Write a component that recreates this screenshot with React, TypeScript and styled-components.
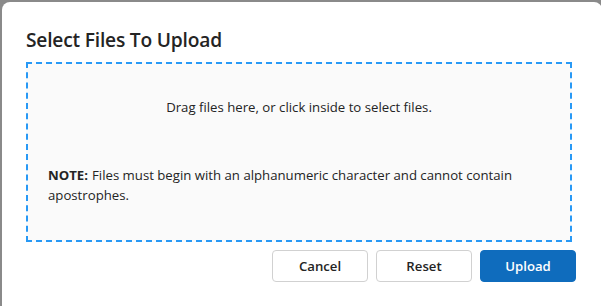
import React from "react";
import styled, { createGlobalStyle } from "styled-components";

const Global = createGlobalStyle`
  html, body {
    margin: 0;
    padding: 0;
    background: #8a8a8a;
    width: 601px;
    height: 306px;
    overflow: hidden;
  }
  * { box-sizing: border-box; }
`;

const Dialog = styled.div`
  margin: 2px 0 0 2px;
  width: 600px;
  height: 304px;
  background: #ffffff;
  border-radius: 8px 8px 0 0;
  padding: 24px 26px 0 24px;
  display: flex;
  flex-direction: column;
  font-family: "Open Sans", "Noto Sans", sans-serif;
  color: #242424;
`;

const Title = styled.h2`
  margin: 0;
  font-size: 19.2px;
  line-height: 28px;
  font-weight: 600;
  letter-spacing: -0.2px;
`;

const DropZone = styled.div`
  margin: 8px 4px 0 0;
  height: 180px;
  border: 2px dashed #2899f5;
  background: #fafafa;
  padding: 33px 20px 0 20px;
  display: flex;
  flex-direction: column;
  gap: 48px;
  font-size: 13.2px;
  line-height: 20px;
`;

const Hint = styled.p`
  margin: 0;
  text-align: center;
`;

const Note = styled.p`
  margin: 0;
`;

const Strong = styled.strong`
  font-weight: 700;
  margin-right: 4px;
`;

const Actions = styled.div`
  margin-top: 8px;
  display: flex;
  justify-content: flex-end;
  gap: 8px;
`;

const Button = styled.button<{ $primary?: boolean }>`
  width: 96px;
  height: 32px;
  border-radius: 4px;
  font-family: "Open Sans", "Noto Sans", sans-serif;
  font-size: 13.2px;
  font-weight: 600;
  cursor: pointer;
  border: 1px solid ${(p) => (p.$primary ? "#0f6cbd" : "#d1d1d1")};
  background: ${(p) => (p.$primary ? "#0f6cbd" : "#ffffff")};
  color: ${(p) => (p.$primary ? "#ffffff" : "#242424")};
  padding: 0;
`;

export default function App() {
  return (
    <>
      <Global />
      <Dialog>
        <Title>Select Files To Upload</Title>
        <DropZone>
          <Hint>Drag files here, or click inside to select files.</Hint>
          <Note>
            <Strong>NOTE:</Strong>Files must begin with an alphanumeric character and cannot contain
            apostrophes.
          </Note>
        </DropZone>
        <Actions>
          <Button>Cancel</Button>
          <Button>Reset</Button>
          <Button $primary>Upload</Button>
        </Actions>
      </Dialog>
    </>
  );
}
